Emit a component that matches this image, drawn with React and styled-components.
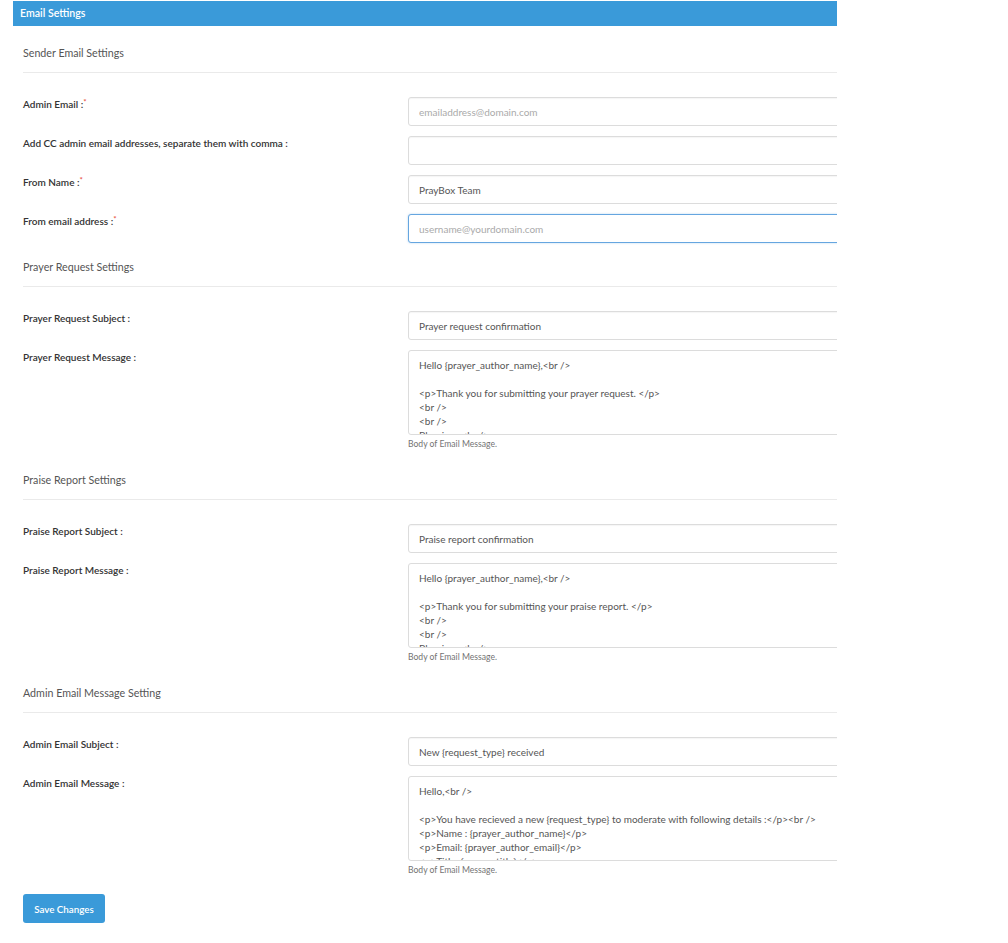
import React from "react";
import styled, { createGlobalStyle } from "styled-components";

const Global = createGlobalStyle`
  html, body { margin: 0; padding: 0; background: #fff; }
  body { font-family: Lato, "Open Sans", Arial, sans-serif; color: #333; }
  * { box-sizing: border-box; }
`;

const Page = styled.div`
  padding: 1px 0 20px 13px;
`;

const Panel = styled.div`
  width: 824px;
  overflow: hidden;
`;

const Header = styled.div`
  height: 25px;
  line-height: 25px;
  background: #3a9ad9;
  color: #fff;
  font-size: 10.6px;
  font-weight: 600;
  padding-left: 7px;
`;

const Body = styled.div`
  padding: 13px 0 0 10px;
`;

const SectionTitle = styled.div`
  padding: 5px 0 10px;
  line-height: 18px;
  font-size: 10.7px;
  color: #555;
  border-bottom: 1px solid #eaeaea;
  margin-bottom: 24px;
`;

const Row = styled.div`
  display: grid;
  grid-template-columns: 385px 600px;
  margin-bottom: 10px;
`;

const Label = styled.label`
  font-size: 10px;
  line-height: 14px;
  font-weight: 600;
  color: #333;
`;

const Req = styled.span`
  color: #e74c3c;
  font-size: 8px;
  vertical-align: top;
  position: relative;
  top: -2px;
`;

const Field = styled.div`
  display: flex;
  flex-direction: column;
`;

const Input = styled.input`
  height: 29px;
  width: 100%;
  border: 1px solid ${(p) => (p.$focused ? "#66a6e0" : "#dcdcdc")};
  border-radius: 3px;
  padding: 0 10px;
  font-family: inherit;
  font-size: 10px;
  color: #555;
  background: #fff;
  outline: none;
  box-shadow: ${(p) => (p.$focused ? "0 0 2px rgba(102,166,224,.5)" : "inset 0 1px 1px rgba(0,0,0,.04)")};
  &::placeholder { color: #aaa; }
`;

const TextArea = styled.textarea`
  display: block;
  height: 85px;
  width: 100%;
  border: 1px solid #dcdcdc;
  border-radius: 3px;
  padding: 7px 10px;
  font-family: inherit;
  font-size: 10px;
  line-height: 14px;
  color: #555;
  resize: none;
  outline: none;
  overflow: hidden;
`;

const Help = styled.div`
  margin: 2px 0 5px;
  font-size: 8.6px;
  line-height: 14px;
  color: #737373;
`;

const Button = styled.button`
  margin-top: 2px;
  height: 29px;
  width: 82px;
  border: none;
  border-radius: 3px;
  background: #3a9ad9;
  color: #fff;
  font-family: inherit;
  font-size: 9.8px;
  font-weight: 600;
  cursor: pointer;
`;

const prayerMsg = `Hello {prayer_author_name},<br />

<p>Thank you for submitting your prayer request. </p>
<br />
<br />
Blessings,<br />
{site_name}`;

const praiseMsg = `Hello {prayer_author_name},<br />

<p>Thank you for submitting your praise report. </p>
<br />
<br />
Blessings,<br />
{site_name}`;

const adminMsg = `Hello,<br />

<p>You have recieved a new {request_type} to moderate with following details :</p><br />
<p>Name : {prayer_author_name}</p>
<p>Email: {prayer_author_email}</p>
<p>Title: {prayer_title}</p>`;

function InputRow({ label, required, ...rest }) {
  return (
    <Row>
      <Label>
        {label}
        {required && <Req>*</Req>}
      </Label>
      <Field>
        <Input {...rest} />
      </Field>
    </Row>
  );
}

function AreaRow({ label, value }) {
  return (
    <Row>
      <Label>{label}</Label>
      <Field>
        <TextArea defaultValue={value} />
        <Help>Body of Email Message.</Help>
      </Field>
    </Row>
  );
}

export default function App() {
  return (
    <>
      <Global />
      <Page>
        <Panel>
          <Header>Email Settings</Header>
          <Body>
            <SectionTitle>Sender Email Settings</SectionTitle>
            <InputRow label="Admin Email :" required placeholder="emailaddress@domain.com" />
            <InputRow label="Add CC admin email addresses, separate them with comma :" />
            <InputRow label="From Name :" required defaultValue="PrayBox Team" />
            <InputRow label="From email address :" required placeholder="username@yourdomain.com" $focused />

            <SectionTitle>Prayer Request Settings</SectionTitle>
            <InputRow label="Prayer Request Subject :" defaultValue="Prayer request confirmation" />
            <AreaRow label="Prayer Request Message :" value={prayerMsg} />

            <SectionTitle>Praise Report Settings</SectionTitle>
            <InputRow label="Praise Report Subject :" defaultValue="Praise report confirmation" />
            <AreaRow label="Praise Report Message :" value={praiseMsg} />

            <SectionTitle>Admin Email Message Setting</SectionTitle>
            <InputRow label="Admin Email Subject :" defaultValue="New {request_type} received" />
            <AreaRow label="Admin Email Message :" value={adminMsg} />

            <Button type="button">Save Changes</Button>
          </Body>
        </Panel>
      </Page>
    </>
  );
}
